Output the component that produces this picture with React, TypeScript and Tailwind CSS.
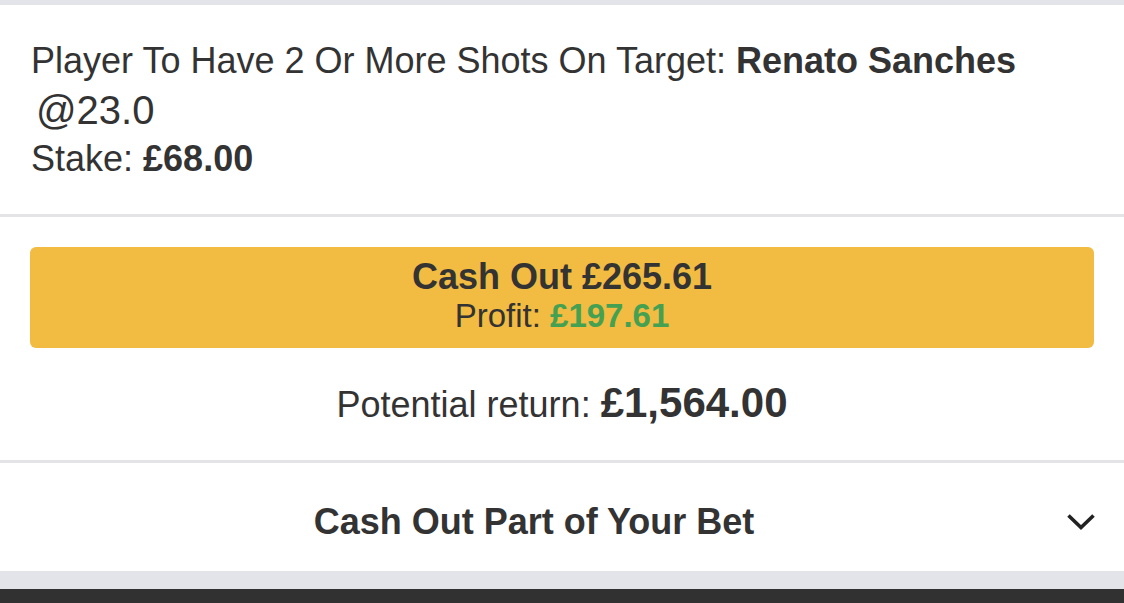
const font = { fontFamily: '"Liberation Sans", Arial, sans-serif' };

function Chevron() {
  return (
    <svg width="30" height="20" viewBox="0 0 30 20" fill="none">
      <polyline points="2.5,3.5 15,15.5 27.5,3.5" stroke="#222222" strokeWidth="3.6" strokeLinecap="butt" strokeLinejoin="miter" />
    </svg>
  );
}

export default function App() {
  return (
    <div className="min-h-[603px] w-[1124px] bg-white text-[#333333]" style={font}>
      <div className="h-[5px] bg-[#e3e4e9]" />

      {/* selection */}
      <div className="px-[31px] pt-[32px] pb-[31px]">
        <p className="text-[36px] leading-[48px]">
          Player To Have 2 Or More Shots On Target: <span className="font-bold">Renato Sanches</span>
        </p>
        <p className="ml-[5px] text-[40px] leading-[50px]">@23.0</p>
        <p className="text-[36px] leading-[48px]">
          Stake: <span className="font-bold">£68.00</span>
        </p>
      </div>

      <div className="h-[3px] bg-[#e4e4e6]" />

      {/* cash out */}
      <div className="px-[30px] pt-[30px]">
        <button className="flex h-[101px] w-full flex-col items-center rounded-[6px] bg-[#f2bb41] pt-[10px] text-[#333333]">
          <span className="text-[36px] font-bold leading-[40px]">Cash Out £265.61</span>
          <span className="text-[33px] leading-[37px]">
            Profit: <span className="font-bold text-[#45a152]">£197.61</span>
          </span>
        </button>
      </div>
      <div className="flex h-[112px] items-baseline justify-center pt-[30px] text-[36px] leading-[50px]">
        <span>Potential return:</span>
        <span className="ml-[10px] text-[42px] font-bold">£1,564.00</span>
      </div>

      <div className="h-[3px] bg-[#e4e4e6]" />

      {/* partial cash out */}
      <div className="flex h-[108px] items-center pl-[30px] pr-[28px] pt-[10px]">
        <span className="flex-1 text-center text-[36px] font-bold leading-[44px]">Cash Out Part of Your Bet</span>
        <div className="flex w-[58px] justify-end">
          <Chevron />
        </div>
      </div>

      <div className="h-[18px] bg-[#e3e4e9]" />
      <div className="h-[15px] bg-[#313131]" />
    </div>
  );
}
